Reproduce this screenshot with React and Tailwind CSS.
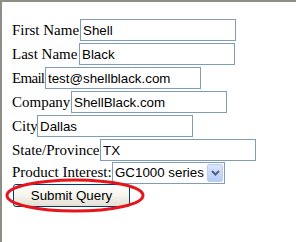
import React from "react";

function Field({ label, value, w, last, tight }) {
  return (
    <div className={`flex items-baseline ${last ? "mb-px" : "mb-[2px]"}`}>
      <span className={`shrink-0 whitespace-nowrap leading-[17px] ${w} ${tight ? "tracking-[-0.7px]" : ""}`}>{label}</span>
      <input
        readOnly
        value={value}
        className="w-[156px] h-[22px] border border-[#7f9db9] bg-white px-[2px] font-['Liberation_Sans',Arial,sans-serif] text-[13.33px] leading-[16px] text-black outline-none"
      />
    </div>
  );
}

export default function App() {
  return (
    <div className="h-[242px] w-[296px] overflow-hidden bg-white border-t-2 border-l-2 border-[#8e8e86] pt-[17px] pl-[10px] font-['Liberation_Serif','Times_New_Roman',serif] text-[15px] text-black">
      <Field label="First Name" value="Shell" w="w-[68px]" />
      <Field label="Last Name" value="Black" w="w-[67px]" />
      <Field label="Email" value="test@shellblack.com" w="w-[33px]" tight />
      <Field label="Company" value="ShellBlack.com" w="w-[59px]" />
      <Field label="City" value="Dallas" w="w-[25px]" />
      <Field label="State/Province" value="TX" w="w-[88px]" last />
      <div className="flex items-baseline">
        <span className="shrink-0 whitespace-nowrap leading-[17px] w-[100px]">Product Interest:</span>
        <div className="flex items-center w-[113px] h-[22px] border border-[#7f9db9] bg-white pl-[2px] font-['Liberation_Sans',Arial,sans-serif] text-[13.33px] text-black">
          <span className="flex-1 leading-[20px] whitespace-nowrap">GC1000 series</span>
          <span className="flex items-center justify-center w-[16px] h-[18px] mr-px rounded-[2px] border border-[#b9cdf5] bg-gradient-to-b from-[#dbe6fd] to-[#b7cbf7]">
            <svg width="9" height="6" viewBox="0 0 9 6">
              <path d="M1 1 L4.5 4.5 L8 1" fill="none" stroke="#4d6185" strokeWidth="2" />
            </svg>
          </span>
        </div>
      </div>
      <div className="relative ml-px w-[117px]">
        <button className="w-[117px] h-[23px] rounded-[3px] border border-[#003c74] bg-gradient-to-b from-[#ffffff] via-[#f5f4ee] to-[#e3e0d2] font-['Liberation_Sans',Arial,sans-serif] text-[13.33px] text-black leading-none">
          Submit Query
        </button>
        <svg
          className="absolute left-[-8px] top-[-6px] pointer-events-none"
          width="140"
          height="35"
          viewBox="0 0 140 35"
        >
          <ellipse cx="70" cy="17.5" rx="68" ry="15.5" fill="none" stroke="#e8141b" strokeWidth="3" />
        </svg>
      </div>
    </div>
  );
}
